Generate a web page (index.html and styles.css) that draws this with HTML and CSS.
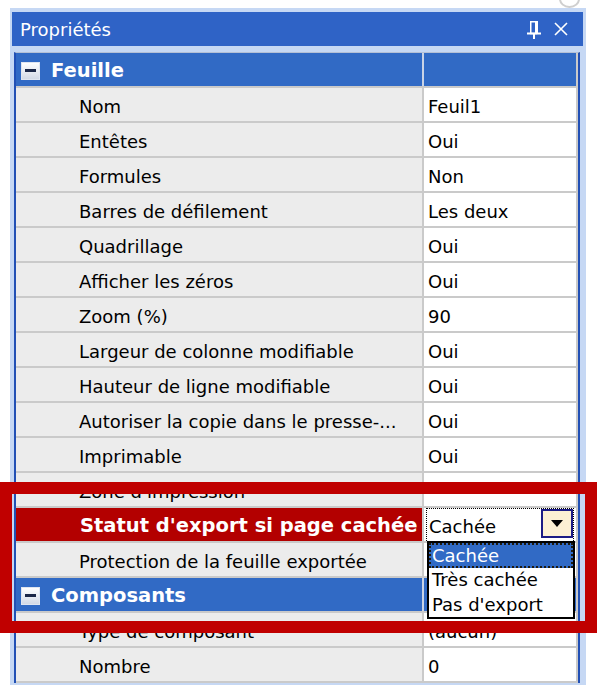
FILE: index.html
```html
<!DOCTYPE html>
<html lang="fr">
<head>
<meta charset="utf-8">
<title>Propriétés</title>
<link rel="stylesheet" href="styles.css">
</head>
<body>
<div class="topstrip"><div class="nub"></div></div>
<div class="panel">
  <div class="titlebar">
    <span class="title">Propriétés</span>
    <span class="tools">
      <svg class="pin" width="14" height="18" viewBox="0 0 14 18">
        <path d="M3.75 0.75H9.5V12.5H3.75Z" fill="none" stroke="#fff" stroke-width="1.5"/>
        <rect x="8" y="0" width="3" height="13" fill="#fff"/>
        <rect x="0" y="11.5" width="14" height="2" fill="#fff"/>
        <rect x="6" y="13" width="2" height="5" fill="#fff"/>
      </svg>
      <svg class="close" width="14" height="14" viewBox="0 0 14 14">
        <path d="M1 1L13 13M13 1L1 13" stroke="#fff" stroke-width="1.6" fill="none"/>
      </svg>
    </span>
  </div>
  <div class="grid">
    <div class="row cat"><div class="name"><span class="toggle"><span class="minus"></span></span>Feuille</div><div class="val"></div></div>
    <div class="row"><div class="name">Nom</div><div class="val">Feuil1</div></div>
    <div class="row"><div class="name">Entêtes</div><div class="val">Oui</div></div>
    <div class="row"><div class="name">Formules</div><div class="val">Non</div></div>
    <div class="row"><div class="name">Barres de défilement</div><div class="val">Les deux</div></div>
    <div class="row"><div class="name">Quadrillage</div><div class="val">Oui</div></div>
    <div class="row"><div class="name">Afficher les zéros</div><div class="val">Oui</div></div>
    <div class="row"><div class="name">Zoom (%)</div><div class="val">90</div></div>
    <div class="row"><div class="name">Largeur de colonne modifiable</div><div class="val">Oui</div></div>
    <div class="row"><div class="name">Hauteur de ligne modifiable</div><div class="val">Oui</div></div>
    <div class="row"><div class="name">Autoriser la copie dans le presse-...</div><div class="val">Oui</div></div>
    <div class="row"><div class="name">Imprimable</div><div class="val">Oui</div></div>
    <div class="row"><div class="name">Zone d'impression</div><div class="val"></div></div>
    <div class="row hl">
      <div class="name">Statut d'export si page cachée</div>
      <div class="val combo-cell">
        <div class="combo"><span class="combo-text">Cachée</span><span class="combo-btn"><span class="tri"></span></span></div>
      </div>
    </div>
    <div class="row"><div class="name">Protection de la feuille exportée</div><div class="val"></div></div>
    <div class="row cat"><div class="name"><span class="toggle"><span class="minus"></span></span>Composants</div><div class="val"></div></div>
    <div class="row"><div class="name">Type de composant</div><div class="val">(aucun)</div></div>
    <div class="row"><div class="name">Nombre</div><div class="val">0</div></div>
  </div>
</div>
<div class="droplist">
  <div class="item selected">Cachée</div>
  <div class="item">Très cachée</div>
  <div class="item">Pas d'export</div>
</div>
<div class="annot"></div>
</body>
</html>
```
FILE: styles.css
```css
* { box-sizing: border-box; }
html, body { margin: 0; }
body {
  background: #fff;
  font-family: "DejaVu Sans", Verdana, sans-serif;
  font-size: 18px;
  color: #000;
  position: relative;
  width: 599px;
  height: 685px;
  overflow: hidden;
}
.topstrip { height: 8px; overflow: hidden; }
.nub {
  width: 21px; height: 18px;
  margin: -10px 0 0 559px;
  border: 2px solid #cfcfcf;
  border-radius: 50%;
}
.panel {
  margin-left: 10px;
  width: 576px;
  height: 677px;
  background: #c6d8f4;
  padding: 4px 3px 0 2px;
}
.titlebar {
  height: 34px;
  background: #2f63c6;
  color: #fff;
  display: flex;
  align-items: center;
  padding: 0 15px 0 8px;
}
.title { flex: 1; }
.tools { display: flex; align-items: center; gap: 13px; }
.pin { margin-top: 2px; }
.grid {
  margin: 6px 3px 0 2px;
  border-left: 2px solid #2250b5;
  border-right: 2px solid #2250b5;
  border-top: 1px solid #b4c0d6;
  background: #fff;
}
.row {
  display: grid;
  grid-template-columns: 408px 154px;
  height: 35px;
  border-bottom: 2px solid #cacaca;
}
.name {
  background: #ececec;
  border-right: 2px solid #cacaca;
  padding: 3px 0 0 63px;
  display: flex;
  align-items: center;
  white-space: nowrap;
  overflow: hidden;
}
.val {
  background: #fff;
  border-right: 2px solid #cacaca;
  padding: 3px 0 0 4px;
  display: flex;
  align-items: center;
  white-space: nowrap;
  overflow: hidden;
}
.cat .name, .cat .val { background: #316ac5; }
.cat .name { border-right-color: #c9d3e6; }
.cat .name {
  padding: 2px 0 0 5px;
  color: #fff;
  font-weight: bold;
  font-size: 19.5px;
}
.toggle {
  width: 19px; height: 18px;
  margin-right: 11px;
  background: linear-gradient(#ffffff, #d2d9e6);
  border: 1px solid #dfe5f0;
  display: flex;
  align-items: center;
  justify-content: center;
}
.minus { width: 11px; height: 3px; background: #1b2747; }
.hl .name {
  background: #b30000;
  color: #fff;
  font-weight: bold;
  font-size: 19.5px;
  padding: 2px 0 0 64px;
}
.combo-cell { padding: 0 2px 0 2px; align-items: stretch; }
.combo {
  flex: 1;
  display: flex;
  align-items: stretch;
  border-top: 1px dotted #000;
  border-left: 1px dotted #000;
  border-right: 1px dotted #000;
}
.combo-text { flex: 1; display: flex; align-items: center; padding: 3px 0 0 2px; }
.combo-btn {
  width: 32px;
  height: 29px;
  background: #fcf0d4;
  border: 2px solid #1c1c86;
  display: flex;
  align-items: center;
  justify-content: center;
}
.tri {
  width: 0; height: 0;
  border-left: 6px solid transparent;
  border-right: 6px solid transparent;
  border-top: 7px solid #000;
}
.droplist {
  position: absolute;
  left: 427px;
  top: 541px;
  width: 148px;
  height: 78px;
  background: #fff;
  border: 2px solid #000;
}
.item {
  height: 24.6px;
  display: flex;
  align-items: center;
  padding-left: 3px;
  white-space: nowrap;
}
.item.selected {
  background: #316ac5;
  color: #fff;
  outline: 2px dotted #1e1a10;
  outline-offset: -2px;
}
.annot {
  position: absolute;
  left: 0;
  top: 482px;
  width: 597px;
  height: 151px;
  border: 12px solid #c00000;
}
```
